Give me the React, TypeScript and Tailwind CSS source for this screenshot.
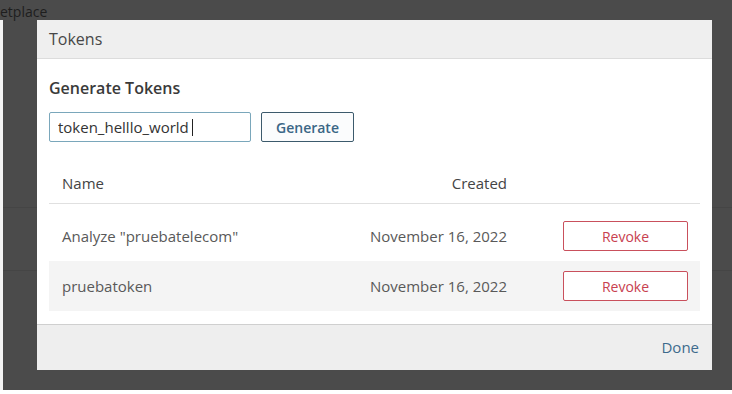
import { useState } from 'react'

interface TokenRow {
  name: string
  created: string
}

const rows: TokenRow[] = [
  { name: 'Analyze "pruebatelecom"', created: 'November 16, 2022' },
  { name: 'pruebatoken', created: 'November 16, 2022' },
]

export default function App() {
  const [value, setValue] = useState('token_helllo_world')

  return (
    <div className="flex h-[394px] w-[732px] flex-col bg-white pb-[4px] font-['Open_Sans',sans-serif]">
      <div className="relative flex-1 overflow-hidden bg-[#4b4b4b]">
        {/* page behind the backdrop */}
        <div className="absolute left-0 top-[4px] text-[14px] leading-[16px] text-[#1e1e1e]">etplace</div>
        <div className="absolute bottom-0 left-0 top-[20px] w-[3px] bg-[#f4f4f4]" />
        <div className="absolute left-[3px] right-0 top-[207px] h-px bg-[#454545]" />
        <div className="absolute left-[3px] right-0 top-[270px] h-px bg-[#454545]" />

        {/* modal */}
        <div className="relative ml-[37px] mt-[20px] flex h-[350px] w-[675px] flex-col bg-white">
          <div className="flex h-[39px] items-center border-b border-[#dcdcdc] bg-[#efefef] px-[12px] text-[16px] text-[#474747]">
            Tokens
          </div>

          <div className="flex-1 px-[12px] pt-[18px]">
            <h2 className="text-[16px] font-semibold leading-[22px] text-[#3a3a3a]">Generate Tokens</h2>

            <div className="mt-[13px] flex gap-[10px]">
              <div className="relative">
                <input
                  value={value}
                  onChange={e => setValue(e.target.value)}
                  className="h-[30px] w-[202px] rounded-[2px] border border-[#7aa7bb] px-[8px] text-[15px] text-[#333] caret-transparent outline-none"
                />
                {/* caret */}
                <div className="absolute left-[143px] top-[7px] h-[17px] w-px bg-[#222]" />
              </div>
              <button className="h-[30px] w-[93px] rounded-[2px] border border-[#3c5a6c] bg-[#fbfcfd] text-[14px] font-semibold text-[#3a6686]">
                Generate
              </button>
            </div>

            <div className="mt-[21px]">
              <div className="flex h-[41px] items-center border-b border-[#e0e0e0] text-[15px] text-[#444]">
                <div className="flex-1 pl-[13px]">Name</div>
                <div className="w-[200px] text-right">Created</div>
                <div className="w-[193px]" />
              </div>
              <div className="h-[7px]" />
              {rows.map((row, i) => (
                <div
                  key={row.name}
                  className={`flex h-[50px] items-center text-[15px] text-[#595959] ${i % 2 === 1 ? 'bg-[#f4f4f4]' : ''}`}
                >
                  <div className="flex-1 pl-[13px]">{row.name}</div>
                  <div className="w-[200px] text-right">{row.created}</div>
                  <div className="w-[193px] pl-[56px]">
                    <button className="h-[30px] w-[125px] rounded-[2px] border border-[#c9505c] bg-white text-[14px] text-[#c8414f]">
                      Revoke
                    </button>
                  </div>
                </div>
              ))}
            </div>
          </div>

          <div className="flex h-[46px] items-center justify-end border-t border-[#cfcfcf] bg-[#eeeeee] pr-[13px]">
            <button className="text-[15px] text-[#3d6a8c]">Done</button>
          </div>
        </div>
      </div>
    </div>
  )
}
